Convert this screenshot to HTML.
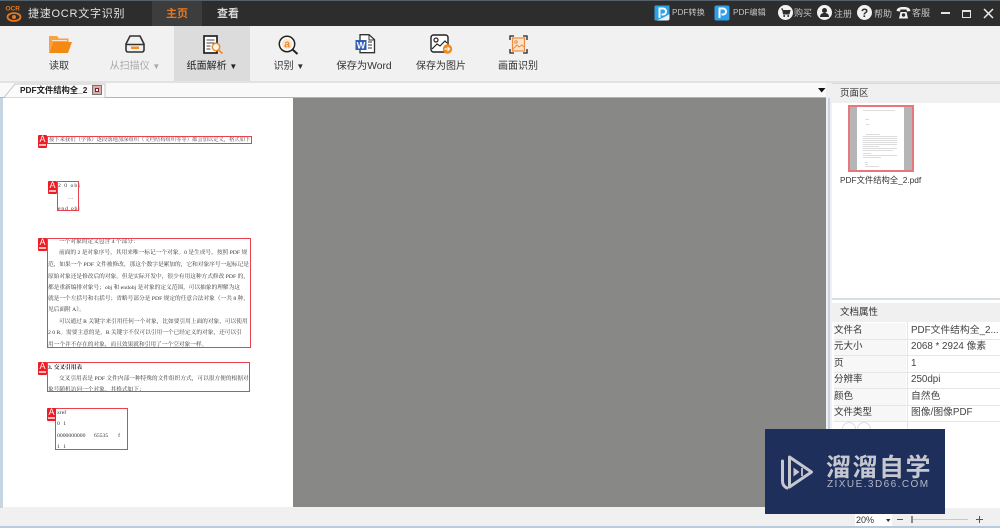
<!DOCTYPE html>
<html lang="zh">
<head>
<meta charset="utf-8">
<title>捷速OCR文字识别</title>
<style>
html,body{margin:0;padding:0;width:1000px;height:528px;overflow:hidden;background:#f0f0f0;font-family:"Liberation Sans","Noto Sans CJK SC",sans-serif;color:#333}
.a{position:absolute}
.t{position:absolute;white-space:nowrap;line-height:14px}
.lab{font-size:10px;color:#333;text-align:center;transform:translateX(-50%)}
.top{font-size:9px;color:#c4c4c4}
svg{position:absolute;overflow:visible}
.doc{position:absolute;white-space:nowrap;font-family:"Liberation Serif","Noto Serif CJK SC",serif;font-size:5.700px;line-height:8px;color:#333;margin-top:1px}
.box{position:absolute;border:1px solid #e8434c;box-sizing:border-box}
.bd{position:absolute;width:9px;height:13px;background:#ee1c25;border-radius:1px;color:#fff;font-size:9px;line-height:9px;text-align:center;overflow:hidden}
.bd i{position:absolute;left:1px;right:1px;bottom:2px;height:2px;background:#fbb}
.rk{position:absolute;left:834px;width:72px;height:16px;background:#f7f7f7;font-size:9.500px;line-height:15px;color:#333;white-space:nowrap}
.rv{position:absolute;left:911px;font-size:9.800px;line-height:15px;color:#444;white-space:nowrap}
.hl{position:absolute;left:834px;width:166px;height:1px;background:#e3e7ea}
</style>
</head>
<body>
<!-- title bar -->
<div class="a" style="left:0;top:0;width:1000px;height:26px;background:#2d2d2d;border-top:1px solid #556068;box-sizing:border-box"></div>
<div class="a" style="left:152px;top:1px;width:50px;height:25px;background:#3d3d3d"></div>
<svg style="left:5px;top:4px" width="19" height="19" viewBox="0 0 19 19">
<text x="0.500" y="6.500" font-size="6.500" font-weight="700" fill="#e8781e" font-family="Liberation Sans">OCR</text>
<ellipse cx="9" cy="13" rx="6.500" ry="4" fill="none" stroke="#e8781e" stroke-width="1.800"/>
<circle cx="9" cy="13" r="2" fill="#e8781e"/>
</svg>
<div class="t" style="left:28px;top:7px;font-size:11px;color:#e4e4e4;letter-spacing:.75px">捷速OCR文字识别</div>
<div class="t" style="left:166px;top:7px;font-size:11px;font-weight:700;color:#e8781e">主页</div>
<div class="t" style="left:217px;top:7px;font-size:11px;font-weight:700;color:#d8d8d8">查看</div>

<svg style="left:654px;top:5px" width="16" height="16" viewBox="0 0 16 16"><rect x="0.500" y="0.500" width="15" height="15" rx="2" fill="#e9f2f8"/><path d="M0.500 9V2.500a2 2 0 0 1 2-2H15.500V9C11 12 6 14 3 15.500H2.500a2 2 0 0 1-2-2z" fill="#2aa2e6"/><path d="M5.500 13V3.500H9a3 3 0 0 1 0 6H7.500" fill="none" stroke="#fff" stroke-width="2"/></svg>
<div class="t top" style="left:672px;top:6px;font-size:8.200px">PDF转换</div>
<svg style="left:714px;top:5px" width="16" height="16" viewBox="0 0 16 16"><rect x="0.500" y="0.500" width="15" height="15" rx="2" fill="#2f9fe8"/><path d="M5.500 13V3.500H9a3 3 0 0 1 0 6H7.500" fill="none" stroke="#fff" stroke-width="2"/></svg>
<div class="t top" style="left:733px;top:6px;font-size:8.200px">PDF编辑</div>
<svg style="left:778px;top:5px" width="15" height="15" viewBox="0 0 15 15"><circle cx="7.500" cy="7.500" r="7.500" fill="#f2f2f2"/><path d="M3 4h1.500l1 5h5.500l1-3.500H5" fill="#2d2d2d" stroke="#2d2d2d"/><circle cx="6.200" cy="11" r="1" fill="#2d2d2d"/><circle cx="10.200" cy="11" r="1" fill="#2d2d2d"/></svg>
<div class="t top" style="left:794px;top:6px">购买</div>
<svg style="left:817px;top:5px" width="15" height="15" viewBox="0 0 15 15"><circle cx="7.500" cy="7.500" r="7.500" fill="#f2f2f2"/><circle cx="7.500" cy="5.500" r="2.500" fill="#2d2d2d"/><path d="M3 12c0-3 2-4 4.500-4s4.500 1 4.500 4z" fill="#2d2d2d"/></svg>
<div class="t top" style="left:834px;top:7px">注册</div>
<svg style="left:857px;top:5px" width="15" height="15" viewBox="0 0 15 15"><circle cx="7.500" cy="7.500" r="7.500" fill="#f2f2f2"/><text x="7.500" y="12" text-anchor="middle" font-size="12" font-weight="700" fill="#2d2d2d" font-family="Liberation Sans">?</text></svg>
<div class="t top" style="left:874px;top:7px">帮助</div>
<svg style="left:896px;top:6px" width="15" height="13" viewBox="0 0 15 13"><path d="M0.500 5C1 1.500 4 1 7.500 1s6.500.5 7 4l-3.500.5L10.500 3.500h-6L4 5.500z" fill="#f2f2f2"/><path d="M3 12.500L4.500 6h6L12 12.500z" fill="#f2f2f2"/><circle cx="7.500" cy="9" r="1.700" fill="#2d2d2d"/></svg>
<div class="t top" style="left:912px;top:6px">客服</div>
<div class="a" style="left:941px;top:12px;width:9px;height:2px;background:#e4e4e4"></div>
<div class="a" style="left:962px;top:10px;width:9px;height:8px;border:1px solid #e4e4e4;border-top-width:2px;box-sizing:border-box"></div>
<svg style="left:983px;top:8px" width="11" height="11" viewBox="0 0 11 11"><path d="M1 1l9 9M10 1l-9 9" stroke="#eee" stroke-width="1.500"/></svg>

<!-- toolbar -->
<div class="a" style="left:0;top:26px;width:1000px;height:56px;background:#f1f1f1"></div>
<div class="a" style="left:174px;top:26px;width:76px;height:55px;background:#dcdcdc"></div>
<div class="a" style="left:0;top:81px;width:1000px;height:2px;background:#e2e2e2"></div>

<svg style="left:49px;top:35px" width="23" height="18" viewBox="0 0 23 18"><path d="M0 17V1h8l2 2.500h9.500V7H4z" fill="#f7a045"/><path d="M3 5.500h15" stroke="#fde6cc" stroke-width="1"/><path d="M0 18L4 7h19L19 18z" fill="#f48a12"/></svg>
<div class="t lab" style="left:59px;top:60px">读取</div>

<svg style="left:125px;top:35px" width="20" height="18" viewBox="0 0 20 18"><path d="M5 1h10l4 8v6a2 2 0 0 1-2 2H3a2 2 0 0 1-2-2V9z" fill="none" stroke="#333" stroke-width="1.600"/><path d="M1.500 9.500h17" stroke="#333" stroke-width="1.400"/><rect x="6" y="11.500" width="8" height="2.500" fill="#f2922c"/></svg>
<div class="t lab" style="left:135px;top:60px;color:#aaa">从扫描仪 <span style="font-size:8px">▼</span></div>

<svg style="left:203px;top:35px" width="22" height="20" viewBox="0 0 22 20"><rect x="1" y="1" width="13" height="17" fill="#fff" stroke="#222" stroke-width="1.700"/><path d="M3.500 5h8M3.500 8h8M3.500 11h4M3.500 14h4" stroke="#444" stroke-width="1"/><circle cx="13" cy="12" r="3.700" fill="#fdf6ee" stroke="#ef8a2d" stroke-width="1.500"/><path d="M15.500 15l4 3.500" stroke="#ef8a2d" stroke-width="1.800"/></svg>
<div class="t lab" style="left:212px;top:60px;color:#222">纸面解析 <span style="font-size:8px">▼</span></div>

<svg style="left:278px;top:35px" width="21" height="20" viewBox="0 0 21 20"><circle cx="9" cy="9" r="7.700" fill="#fff" stroke="#222" stroke-width="1.500"/><circle cx="9" cy="9" r="5.500" fill="#fbe7d3"/><text x="9" y="12.500" text-anchor="middle" font-size="11" font-weight="700" fill="#ee8a2a" font-family="Liberation Sans">a</text><path d="M14.500 14.500l5 4.500" stroke="#222" stroke-width="2"/></svg>
<div class="t lab" style="left:289px;top:60px">识别 <span style="font-size:8px">▼</span></div>

<svg style="left:355px;top:34px" width="21" height="20" viewBox="0 0 21 20"><path d="M5 0.700h9l5.500 5V18.700H5z" fill="#fff" stroke="#333" stroke-width="1.300"/><path d="M14 0.700V6h5.500" fill="none" stroke="#333" stroke-width="1"/><path d="M13 8h4M13 11h4M13 14h4" stroke="#333" stroke-width="1.100"/><rect x="0.500" y="6" width="11" height="10" fill="#2f5fb5"/><text x="6" y="14.300" text-anchor="middle" font-size="9" font-weight="700" fill="#fff" font-family="Liberation Sans">W</text></svg>
<div class="t lab" style="left:364px;top:60px;font-size:10.300px">保存为Word</div>

<svg style="left:430px;top:34px" width="24" height="21" viewBox="0 0 24 21"><rect x="1" y="1" width="17" height="17" rx="2.500" fill="#fff" stroke="#222" stroke-width="1.400"/><circle cx="6" cy="6" r="2" fill="none" stroke="#222" stroke-width="1.200"/><path d="M2 15l5-5 3 2 5-5 2 2" fill="none" stroke="#222" stroke-width="1.200"/><circle cx="17.500" cy="15" r="4.700" fill="#f28a1c"/><path d="M14.500 15h5M17.500 13l2 2-2 2" fill="none" stroke="#fff" stroke-width="1.200"/></svg>
<div class="t lab" style="left:441px;top:60px">保存为图片</div>

<svg style="left:509px;top:35px" width="19" height="19" viewBox="0 0 19 19"><path d="M1 5V1h4M14 1h4v4M18 14v4h-4M5 18H1v-4" fill="none" stroke="#222" stroke-width="1.300"/><rect x="3.500" y="3" width="12" height="13" fill="#fbe4ce" stroke="#ef8a3c" stroke-width="1.200"/><circle cx="7" cy="7" r="1.300" fill="none" stroke="#ef8a3c"/><path d="M4 14l4-4 2 2 3-2 2 2" fill="none" stroke="#ef8a3c"/></svg>
<div class="t lab" style="left:518px;top:60px">画面识别</div>

<!-- tab strip -->
<div class="a" style="left:0;top:83px;width:830px;height:15px;background:#f9f9f9;border-bottom:1px solid #b4b4b4;box-sizing:border-box"></div>
<svg style="left:0;top:83px" width="110" height="15" viewBox="0 0 110 15"><path d="M4 14.500L15 1h90v13.500" fill="#fbfbfb" stroke="#c9c9c9"/></svg>
<div class="t" style="left:20px;top:83px;font-size:8.300px;font-weight:700;color:#222">PDF文件结构全_2</div>
<div class="a" style="left:92px;top:85px;width:10px;height:10px;background:#d8aca8;border:1px solid #777;box-sizing:border-box"></div>
<div class="a" style="left:95px;top:88px;width:4px;height:4px;background:#fff;border:1px solid #822;box-sizing:border-box"></div>
<svg style="left:818px;top:88px" width="8" height="5"><path d="M0 0h7.500L3.700 4.500z" fill="#111"/></svg>

<!-- document area -->
<div class="a" style="left:0;top:98px;width:3px;height:412px;background:#c6d5e2"></div>
<div class="a" style="left:3px;top:98px;width:290px;height:409px;background:#fff"></div>
<div class="a" style="left:293px;top:98px;width:533px;height:409px;background:#888886"></div>
<div class="a" style="left:826px;top:83px;width:6px;height:427px;background:#f0f0f0"></div>
<div class="a" style="left:828px;top:98px;width:2px;height:412px;background:#c6d5e2"></div>

<!-- page text -->
<div class="doc" style="left:49px;top:135px;font-size:5.300px;color:#444">接下来我们（字体）逐段落地加深组织（文档结构组织等等）都会加以定义，格式如下：</div>
<div class="doc" style="left:58px;top:181px;letter-spacing:1px">2 0 obj</div>
<div class="doc" style="left:68px;top:193px;letter-spacing:1px">…</div>
<div class="doc" style="left:58px;top:204px;letter-spacing:.8px">end obj</div>

<div class="doc" style="left:59px;top:237px">一个对象的定义包含 4 个部分：</div>
<div class="doc" style="left:59px;top:248px">前面的 2 是对象序号，其用来唯一标记一个对象。0 是生成号，按照 PDF 规</div>
<div class="doc" style="left:48px;top:260px">范，如果一个 PDF 文件被修改，那这个数字是累加的，它和对象序号一起标记是</div>
<div class="doc" style="left:48px;top:272px">原始对象还是修改后的对象。但是实际开发中，很少有用这种方式修改 PDF 的，</div>
<div class="doc" style="left:48px;top:283px">都是重新编排对象号；obj 和 endobj 是对象的定义范围，可以抽象的理解为这</div>
<div class="doc" style="left:48px;top:294px">就是一个左括号和右括号；省略号部分是 PDF 规定的任意合法对象（一共 8 种，</div>
<div class="doc" style="left:48px;top:305px">见后面附 A）。</div>
<div class="doc" style="left:59px;top:317px">可以通过 R 关键字来引用任何一个对象，比如要引用上面的对象，可以使用</div>
<div class="doc" style="left:48px;top:328px">2 0 R。需要主意的是，R 关键字不仅可以引用一个已经定义的对象，还可以引</div>
<div class="doc" style="left:48px;top:340px">用一个并不存在的对象，而且效果就和引用了一个空对象一样。</div>

<div class="doc" style="left:48px;top:363px;font-weight:700;color:#222">3. 交叉引用表</div>
<div class="doc" style="left:59px;top:374px">交叉引用表是 PDF 文件内部一种特殊的文件组织方式，可以很方便的根据对</div>
<div class="doc" style="left:48px;top:385px">象号随机访问一个对象。其格式如下：</div>

<div class="doc" style="left:57px;top:408px">xref</div>
<div class="doc" style="left:57px;top:419px;letter-spacing:1px">0 1</div>
<div class="doc" style="left:57px;top:431px">0000000000 &nbsp; &nbsp; &nbsp;65535 &nbsp; &nbsp; &nbsp; f</div>
<div class="doc" style="left:57px;top:442px;letter-spacing:1px">1 1</div>

<!-- boxes -->
<div class="box" style="left:47px;top:136px;width:205px;height:8px"></div>
<div class="box" style="left:57px;top:181px;width:22px;height:30px"></div>
<div class="box" style="left:47px;top:238px;width:204px;height:110px"></div>
<div class="box" style="left:47px;top:362px;width:203px;height:30px"></div>
<div class="box" style="left:55px;top:408px;width:73px;height:42px"></div>
<div class="bd" style="left:38px;top:135px">A<i></i></div>
<div class="bd" style="left:48px;top:181px">A<i></i></div>
<div class="bd" style="left:38px;top:238px">A<i></i></div>
<div class="bd" style="left:38px;top:362px">A<i></i></div>
<div class="bd" style="left:47px;top:408px">A<i></i></div>

<!-- right panel: pages -->
<div class="a" style="left:832px;top:83px;width:168px;height:20px;background:#f0f0f0"></div>
<div class="a" style="left:832px;top:83px;width:168px;height:1px;background:#dcdcdc"></div>
<div class="t" style="left:840px;top:87px;font-size:9.500px">页面区</div>
<div class="a" style="left:832px;top:103px;width:168px;height:195px;background:#fff"></div>
<div class="a" style="left:848px;top:105px;width:66px;height:67px;border:2px solid #e8777d;box-sizing:border-box;background:#fff"></div>
<div class="a" style="left:850px;top:107px;width:7px;height:63px;background:#b5b5b5"></div>
<div class="a" style="left:904px;top:107px;width:8px;height:63px;background:#b5b5b5"></div>
<svg style="left:857px;top:107px" width="47" height="63" viewBox="0 0 47 63">
<g fill="#dcdcdc">
<rect x="6" y="3" width="32" height="1"/><rect x="8" y="12" width="4" height="1"/><rect x="9" y="17" width="3" height="1"/>
<rect x="9" y="27" width="14" height="1"/>
<rect x="6" y="29" width="34" height="1"/><rect x="6" y="31" width="34" height="1"/><rect x="6" y="33" width="34" height="1"/><rect x="6" y="35" width="34" height="1"/><rect x="6" y="37" width="34" height="1"/><rect x="6" y="39" width="16" height="1"/><rect x="6" y="41" width="34" height="1"/><rect x="6" y="43" width="30" height="1"/>
<rect x="6" y="46" width="8" height="1"/><rect x="6" y="48" width="34" height="1"/><rect x="6" y="50" width="18" height="1"/>
<rect x="8" y="55" width="3" height="1"/><rect x="8" y="57" width="3" height="1"/><rect x="8" y="59" width="14" height="1"/>
</g></svg>
<div class="t" style="left:840px;top:173px;font-size:8.300px">PDF文件结构全_2.pdf</div>

<div class="a" style="left:832px;top:298px;width:168px;height:2px;background:#d5dfe6"></div>
<div class="a" style="left:832px;top:300px;width:168px;height:210px;background:#fff"></div>

<!-- right panel: props -->
<div class="a" style="left:832px;top:303px;width:168px;height:19px;background:#f0f0f0"></div>
<div class="t" style="left:840px;top:306px;font-size:9.500px">文档属性</div>
<div class="rk" style="top:323px">文件名</div><div class="rv" style="top:323px">PDF文件结构全_2...</div>
<div class="rk" style="top:339px">元大小</div><div class="rv" style="top:339px">2068 * 2924 像素</div>
<div class="rk" style="top:356px">页</div><div class="rv" style="top:356px">1</div>
<div class="rk" style="top:372px">分辨率</div><div class="rv" style="top:372px">250dpi</div>
<div class="rk" style="top:389px">颜色</div><div class="rv" style="top:389px">自然色</div>
<div class="rk" style="top:405px">文件类型</div><div class="rv" style="top:405px">图像/图像PDF</div>
<div class="hl" style="top:339px"></div><div class="hl" style="top:355px"></div><div class="hl" style="top:372px"></div><div class="hl" style="top:388px"></div><div class="hl" style="top:405px"></div><div class="hl" style="top:421px"></div>
<div class="a" style="left:907px;top:322px;width:1px;height:116px;background:#e3e7ea"></div>
<svg style="left:841px;top:421px" width="32" height="10" viewBox="0 0 32 10"><circle cx="8" cy="8" r="6.500" fill="none" stroke="#ddd"/><circle cx="23" cy="8" r="6.500" fill="none" stroke="#ddd"/></svg>

<!-- status bar -->
<div class="a" style="left:0;top:508px;width:1000px;height:20px;background:#f0f0f0"></div>
<div class="a" style="left:0;top:526px;width:1000px;height:2px;background:#b9cbdc"></div>
<div class="a" style="left:855px;top:514px;width:37px;height:12px;background:#fff"></div>
<div class="t" style="left:856px;top:513px;font-size:9px;color:#333">20%</div>
<svg style="left:886px;top:519px" width="5" height="3"><path d="M0 0h4.500L2.200 3z" fill="#333"/></svg>
<div class="a" style="left:897px;top:519px;width:6px;height:1px;background:#555"></div>
<div class="a" style="left:911px;top:519px;width:57px;height:1px;background:#c9c9c9"></div>
<div class="a" style="left:911px;top:516px;width:2px;height:7px;background:#888"></div>
<div class="a" style="left:976px;top:519px;width:7px;height:1px;background:#555"></div>
<div class="a" style="left:979px;top:516px;width:1px;height:7px;background:#555"></div>

<!-- watermark -->
<div class="a" style="left:765px;top:429px;width:180px;height:85px;background:#1f2f5c"></div>
<svg style="left:780px;top:454px" width="35" height="36" viewBox="0 0 35 36"><path d="M2.500 7V27Q2.500 32 7 34" fill="none" stroke="#c6c8d0" stroke-width="3" stroke-linecap="round"/><path d="M9.500 3L31.500 18L9.500 33Z" fill="none" stroke="#c6c8d0" stroke-width="3" stroke-linejoin="round"/><path d="M13.500 13.500L19.500 18L13.500 22.500Z" fill="#c6c8d0"/><path d="M22 14v8" stroke="#c6c8d0" stroke-width="1.800"/></svg>
<div class="t" style="left:826px;top:451px;font-size:25px;line-height:30px;font-weight:700;color:#c6c8d0;letter-spacing:1.500px;font-family:'Noto Sans CJK SC',sans-serif">溜溜自学</div>
<div class="t" style="left:827px;top:478px;font-size:10px;line-height:14px;color:#b4b8c6;letter-spacing:1.450px">ZIXUE.3D66.COM</div>
</body>
</html>
